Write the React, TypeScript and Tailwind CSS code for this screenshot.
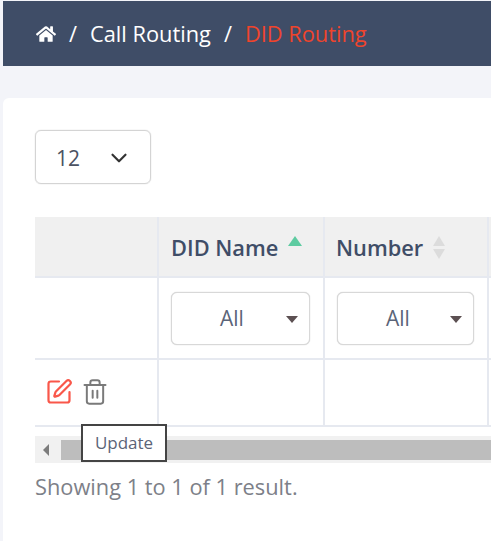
import React from "react";
import { SquarePen, Trash2, ChevronDown } from "lucide-react";
import { FaHome } from "react-icons/fa";

const FilterSelect = ({ width }: { width: string }) => (
  <div className={`flex h-[53px] ${width} items-center rounded-[6px] border-[1.5px] border-[#d8d8d8] bg-white shadow-[0_0_1px_#bbb]`}>
    <span className="ml-[48px] text-[21px] text-[#5b6478]">All</span>
    <span className="ml-auto mr-[11px] mt-[2px] h-0 w-0 border-x-[6px] border-t-[7px] border-x-transparent border-t-[#5c5052]" />
  </div>
);

const App = () => {
  return (
    <div className="h-[541px] w-[491px] overflow-hidden bg-[#f3f4f9] pl-[3px] pt-px font-['Open_Sans',sans-serif]">
      <div className="flex h-[65px] items-center gap-[13px] bg-[#3f4d67] pl-[33px] pt-[1px] text-[21.8px] text-white">
        <FaHome size={20} className="text-white" />
        <span>/</span>
        <span>Call Routing</span>
        <span>/</span>
        <span className="text-[#f0442c]">DID Routing</span>
      </div>

      <div className="mt-[32px] h-[443px] rounded-tl-[6px] bg-white pl-[32px] pt-[32px]">
        <div className="flex h-[54px] w-[116px] items-center rounded-[6px] border-[1.5px] border-[#d4d4d4] pl-[20px] pr-[18px] shadow-[0_0_1px_#bbb]">
          <span className="mt-[3px] text-[21px] text-[#4b5262]">12</span>
          <ChevronDown size={26} strokeWidth={2} className="ml-auto mt-[1px] text-[#333]" />
        </div>

        <div className="relative mt-[33px] w-[456px] overflow-hidden">
          <div className="grid w-[500px] grid-cols-[122px_166px_164px_48px] grid-rows-[61px_82px_67px]">
            <div className="border-b-2 border-[#e6e9f0] bg-[#f0f0f0]" />
            <div className="flex border-b-2 border-l-2 border-[#e6e9f0] bg-[#f0f0f0] pl-[12px]">
              <span className="mt-[16px] text-[21.8px] font-semibold leading-[30px] text-[#3f4d67]">DID Name</span>
              <span className="ml-[10px] mt-[19px] h-0 w-0 border-x-[7px] border-b-[10px] border-x-transparent border-b-[#5ecba1]" />
            </div>
            <div className="flex border-b-2 border-l-2 border-[#e6e9f0] bg-[#f0f0f0] pl-[11px]">
              <span className="mt-[16px] text-[21.8px] font-semibold leading-[30px] text-[#3f4d67]">Number</span>
              <span className="ml-[10px] mt-[19px] flex flex-col gap-[3px]">
                <span className="h-0 w-0 border-x-[6px] border-b-[10px] border-x-transparent border-b-[#dcdcdc]" />
                <span className="h-0 w-0 border-x-[6px] border-t-[10px] border-x-transparent border-t-[#dcdcdc]" />
              </span>
            </div>
            <div className="border-b-2 border-l-2 border-[#e6e9f0] bg-[#f0f0f0]" />

            <div className="border-b-2 border-[#e6e9f0]" />
            <div className="border-b-2 border-l-2 border-[#e6e9f0] pl-[12px] pt-[14px]">
              <FilterSelect width="w-[139px]" />
            </div>
            <div className="border-b-2 border-l-2 border-[#e6e9f0] pl-[12px] pt-[14px]">
              <FilterSelect width="w-[137px]" />
            </div>
            <div className="border-b-2 border-l-2 border-[#e6e9f0]" />

            <div className="flex items-start border-b-2 border-[#e6e9f0] pl-[10px] pt-[18px]">
              <SquarePen size={28} strokeWidth={1.9} className="text-[#f9574a]" />
              <Trash2 size={28} strokeWidth={1.7} className="ml-[8px] text-[#7a7a7a]" />
            </div>
            <div className="border-b-2 border-l-2 border-[#e6e9f0]" />
            <div className="border-b-2 border-l-2 border-[#e6e9f0]" />
            <div className="border-b-2 border-l-2 border-[#e6e9f0]" />
          </div>

          <div className="mt-[9px] flex h-[27px] items-center bg-[#f1f1f1]">
            <span className="ml-[8px] h-0 w-0 border-y-[6px] border-r-[6px] border-y-transparent border-r-[#7c7c7c]" />
            <div className="ml-[12px] h-[20px] flex-1 bg-[#bdbdbd]" />
          </div>

          <div className="absolute left-[46px] top-[207px] flex h-[38px] w-[86px] items-center justify-center border-2 border-[#444] bg-white text-[17px] text-[#5b6478]">
            Update
          </div>
        </div>

        <p className="mt-[8px] text-[21.8px] text-[#7d8088]">Showing 1 to 1 of 1 result.</p>
      </div>
    </div>
  );
};

export default App;
